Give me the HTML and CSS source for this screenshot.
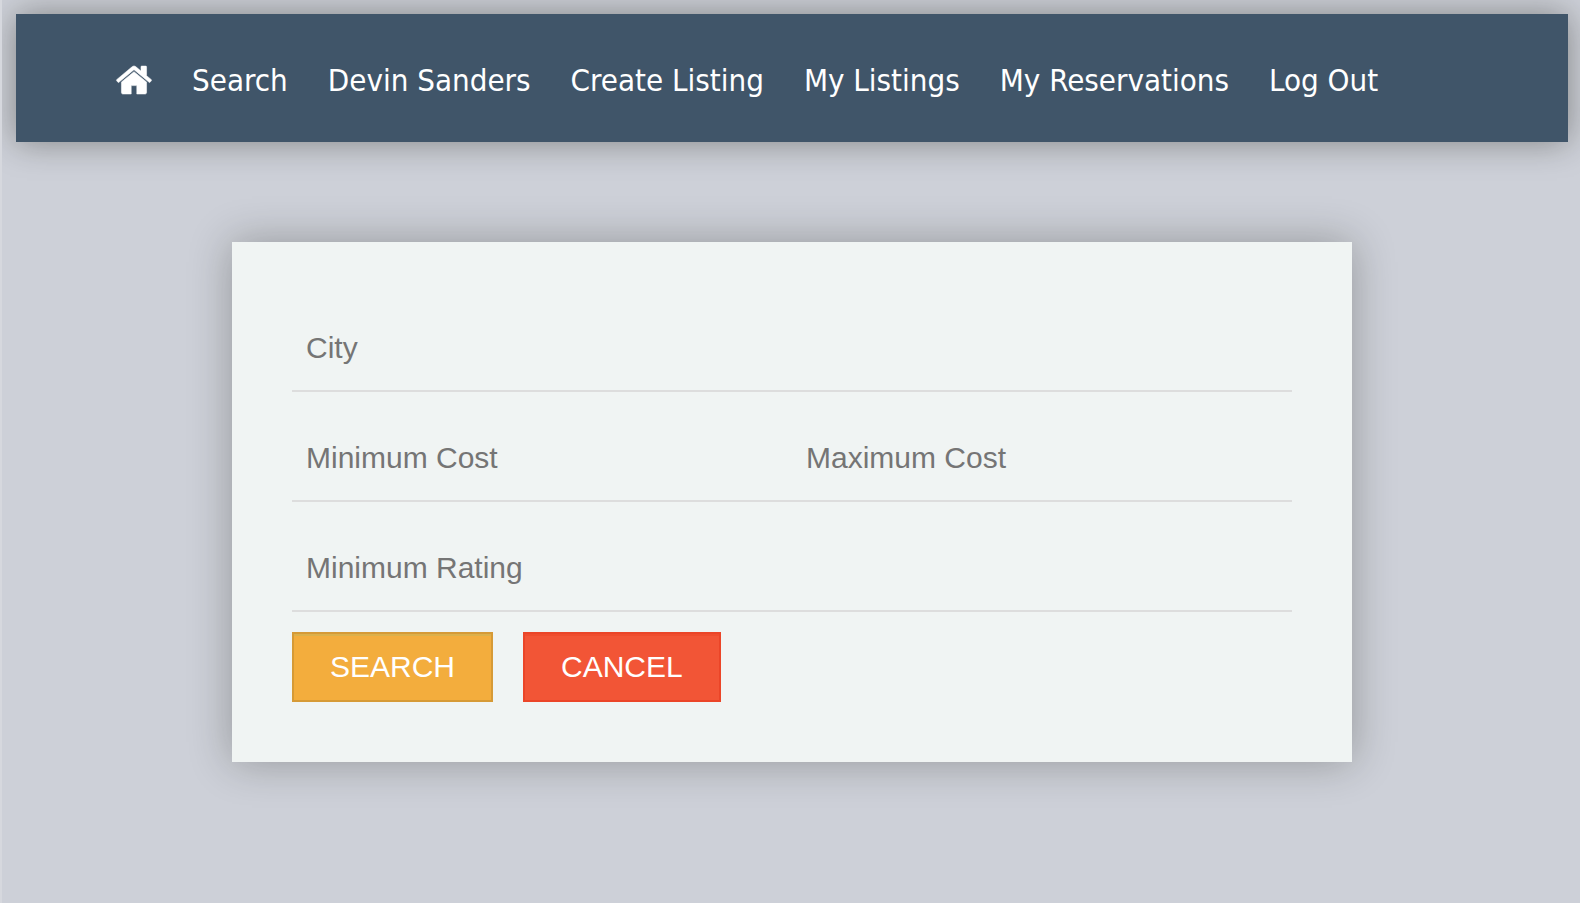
FILE: index.html
```html
<!DOCTYPE html>
<html lang="en">
<head>
<meta charset="utf-8">
<title>Search Listings</title>
<link rel="stylesheet" href="styles.css">
</head>
<body>
<nav class="navbar" aria-label="Main">
  <a class="nav-link" href="#home" aria-label="Home"><svg class="home-icon" viewBox="89 253 1614 1283" aria-hidden="true"><path d="M1472 992v480q0 26-19 45t-45 19h-384v-384h-256v384h-384q-26 0-45-19t-19-45v-480q0-1 .5-3t.5-3l575-474 575 474q1 2 1 6zm223-69l-62 74q-8 9-21 11h-3q-13 0-21-7l-692-577-692 577q-12 8-24 7-13-2-21-11l-62-74q-8-10-7-23.5t11-21.5l719-599q32-26 76-26t76 26l244 204v-195q0-14 9-23t23-9h192q14 0 23 9t9 23v408l219 182q10 8 11 21.5t-7 23.5z"/></svg></a>
  <a class="nav-link" href="#search">Search</a>
  <a class="nav-link" href="#profile">Devin Sanders</a>
  <a class="nav-link" href="#create">Create Listing</a>
  <a class="nav-link" href="#listings">My Listings</a>
  <a class="nav-link" href="#reservations">My Reservations</a>
  <a class="nav-link" href="#logout">Log Out</a>
</nav>
<main class="content">
  <form class="card">
    <div class="row"><input class="field" type="text" placeholder="City" aria-label="City"></div>
    <div class="row">
      <input class="field" type="text" placeholder="Minimum Cost" aria-label="Minimum Cost">
      <input class="field" type="text" placeholder="Maximum Cost" aria-label="Maximum Cost">
    </div>
    <div class="row"><input class="field" type="text" placeholder="Minimum Rating" aria-label="Minimum Rating"></div>
    <div class="actions">
      <button class="button button-search" type="submit">SEARCH</button>
      <button class="button button-cancel" type="button">CANCEL</button>
    </div>
  </form>
</main>
</body>
</html>
```
FILE: styles.css
```css
* {
  box-sizing: border-box;
}

body {
  margin: 0;
  min-height: 100vh;
  padding: 14px 12px 0 14px;
  border-left: 2px solid #d6d8de;
  background: #cdd0d8;
  font-family: "Liberation Sans", Arial, sans-serif;
}

.navbar {
  display: flex;
  align-items: center;
  gap: 40px;
  min-height: 128px;
  padding: 4px 100px 0;
  background: #405569;
  box-shadow: 0 0 32px rgba(20, 20, 10, 0.4);
}

.nav-link {
  color: #fff;
  font-family: "DejaVu Sans Condensed", "DejaVu Sans", sans-serif;
  font-size: 31px;
  line-height: 40px;
  white-space: nowrap;
  text-decoration: none;
}

.home-icon {
  display: block;
  width: 36px;
  height: 28px;
  fill: currentColor;
  stroke: currentColor;
  stroke-width: 24;
  overflow: visible;
}

.content {
  padding: 100px 14px;
}

.card {
  max-width: 1120px;
  margin: 0 auto;
  padding: 60px;
  background: #f0f4f3;
  box-shadow: 0 0 40px rgba(20, 20, 10, 0.3);
}

.row {
  display: flex;
  margin-bottom: 20px;
  border-bottom: 2px solid #ddd;
}

.field {
  flex: 1;
  min-width: 0;
  height: 88px;
  padding: 4px 14px 0;
  border: 0;
  background: transparent;
  color: #333;
  font: 30px "Liberation Sans", Arial, sans-serif;
}

.field::placeholder {
  color: #757575;
  opacity: 1;
}

.actions {
  display: flex;
  gap: 30px;
}

.button {
  height: 70px;
  padding: 0 36px;
  border: 2px solid;
  color: #fff;
  font: 30px "Liberation Sans", Arial, sans-serif;
}

.button-search {
  background: #f3ad3d;
  border-color: #d69a36;
  box-shadow: inset 0 2px #dcb04a;
}

.button-cancel {
  background: #f25536;
  border-color: #eb4528;
  box-shadow: inset 0 2px #ef4d2e;
}
```
